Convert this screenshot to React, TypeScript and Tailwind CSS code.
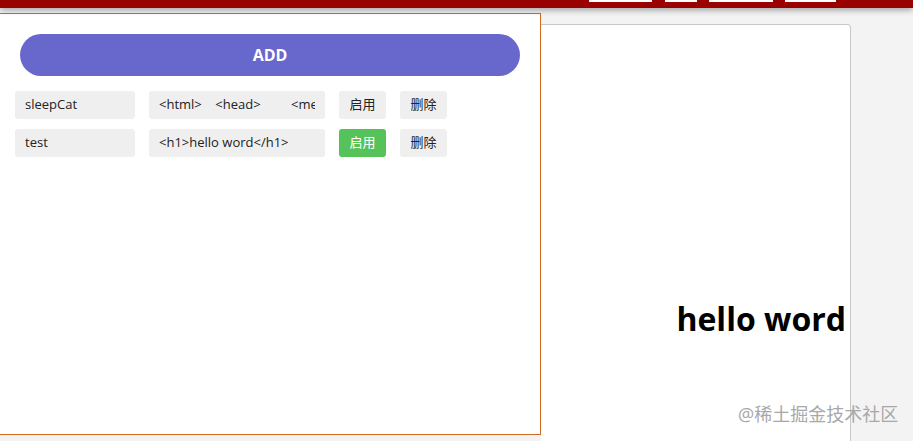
import React from 'react';

type Item = { name: string; code: string; active: boolean };

const items: Item[] = [
  { name: 'sleepCat', code: '<html>    <head>         <meta charset="utf-8">', active: false },
  { name: 'test', code: '<h1>hello word</h1>', active: true },
];

const cjk = "font-['Open_Sans','Noto_Sans_CJK_SC',sans-serif]";

const Row = ({ item }: { item: Item }) => (
  <div className="flex h-[28px] gap-[14px]">
    <div className="flex w-[120px] items-center rounded-[3px] bg-[#efefef] px-[10px] text-[13px] text-[#222]">
      {item.name}
    </div>
    <div className="flex w-[176px] items-center overflow-hidden rounded-[3px] bg-[#efefef] px-[10px] text-[13px] text-[#222]">
      <span className="block w-full overflow-hidden whitespace-pre">{item.code}</span>
    </div>
    <button
      className={`w-[47px] rounded-[3px] text-[13px] ${cjk} ${
        item.active ? 'bg-[#55c35a] text-white' : 'bg-[#efefef] text-[#222]'
      }`}
    >
      启用
    </button>
    <button className={`w-[47px] rounded-[3px] bg-[#efefef] text-[13px] text-[#222] ${cjk}`}>删除</button>
  </div>
);

export default function App() {
  return (
    <div className="relative flex h-[441px] w-[913px] flex-col overflow-hidden bg-[#f3f3f3] font-['Open_Sans',sans-serif]">
      {/* top bar */}
      <div className="relative z-10 flex h-[8px] shrink-0 bg-[#990000] shadow-[0_2px_6px_rgba(0,0,0,0.35)]">
        <div className="ml-[589px] h-[2px] w-[63px] bg-white" />
        <div className="ml-[13px] h-[2px] w-[32px] bg-white" />
        <div className="ml-[12px] h-[2px] w-[64px] bg-white" />
        <div className="ml-[12px] h-[2px] w-[51px] bg-white" />
      </div>

      <div className="flex items-start">
        {/* editor panel */}
        <div className="mt-[5px] h-[422px] w-[541px] shrink-0 border-y border-r border-[#d2691e] bg-white pt-[20px]">
          <button className="mx-[20px] h-[42px] w-[500px] rounded-full bg-[#6868cc] text-[16px] font-bold text-white">
            ADD
          </button>
          <div className="mt-[15px] flex flex-col gap-[10px] px-[15px]">
            {items.map(item => (
              <Row key={item.name} item={item} />
            ))}
          </div>
        </div>

        {/* preview panel */}
        <div className="mt-[16px] h-[430px] w-[310px] shrink-0 rounded-tr-[4px] border-t border-r border-[#c8c8c8] bg-white">
          <div className="flex justify-end pt-[270px] pr-[4px]">
            <h1 className="text-[32px] font-bold text-black font-['Open_Sans',sans-serif]">hello word</h1>
          </div>
        </div>
      </div>

      <div className={`absolute left-[738px] top-[401px] text-[18px] text-[#a8a8a8] ${cjk}`}>@稀土掘金技术社区</div>
    </div>
  );
}
